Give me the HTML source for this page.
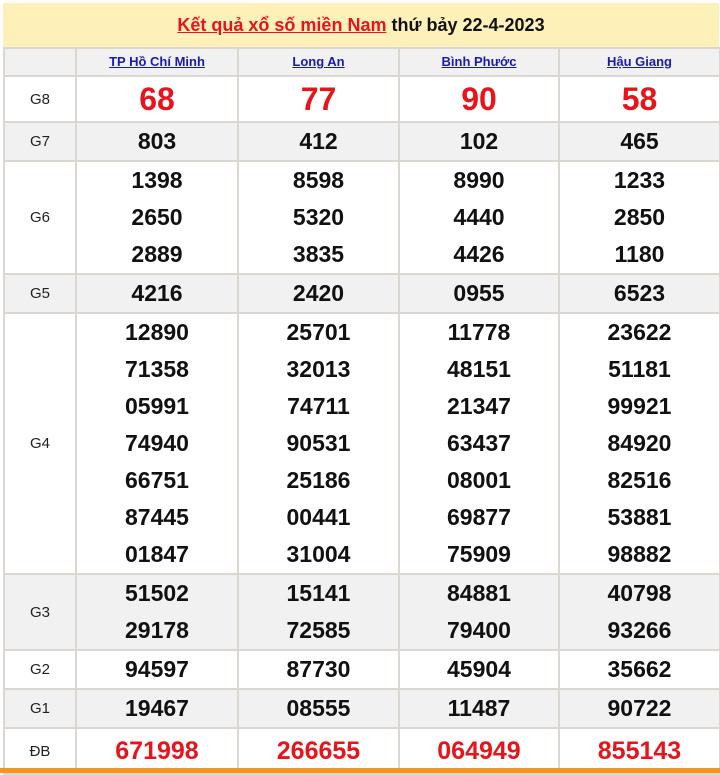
<!DOCTYPE html>
<html><head><meta charset="utf-8"><style>
*{margin:0;padding:0;box-sizing:border-box}
body{width:720px;height:773px;background:#fff;font-family:"Liberation Sans",Arial,sans-serif;position:relative;overflow:hidden}
.hdr{position:absolute;left:3px;top:3px;width:716px;height:45px;background:#fdf0b9;text-align:center;font-weight:bold;font-size:18px;line-height:45px;color:#111}
.hdr a{color:#e8141c;text-decoration:underline}
table{position:absolute;left:3px;top:47px;border-collapse:collapse;width:716px;table-layout:fixed}
td{border:2px solid #dcd6d0;text-align:center;vertical-align:middle;padding:0}
.lb{font-size:15px;color:#222}
.th td{background:#f1f1f1;height:28px}
.th a{color:#1a1ab0;font-weight:bold;font-size:13px;text-decoration:underline}
.g{background:#f1f1f1}
.n{font-weight:bold;font-size:23px;color:#111;line-height:37px}
.r8{font-weight:bold;font-size:32px;color:#e8141c}
.db{font-size:25px;color:#e8141c;font-weight:bold;letter-spacing:0}
.bar{position:absolute;left:0;top:768px;width:720px;height:5px;background:#f7941d}
</style></head><body>
<div class="hdr"><a>Kết quả xổ số miền Nam</a> thứ bảy 22-4-2023</div>
<table>
<colgroup><col style="width:72px"><col style="width:162px"><col style="width:161px"><col style="width:160px"><col style="width:161px"></colgroup>
<tr class="th"><td></td><td><a>TP Hồ Chí Minh</a></td><td><a>Long An</a></td><td><a>Bình Phước</a></td><td><a>Hậu Giang</a></td></tr>
<tr style="height:46px"><td class="lb">G8</td><td class="r8">68</td><td class="r8">77</td><td class="r8">90</td><td class="r8">58</td></tr>
<tr class="g" style="height:38px"><td class="lb">G7</td><td class="n">803</td><td class="n">412</td><td class="n">102</td><td class="n">465</td></tr>
<tr style="height:112px"><td class="lb">G6</td><td class="n">1398<br>2650<br>2889</td><td class="n">8598<br>5320<br>3835</td><td class="n">8990<br>4440<br>4426</td><td class="n">1233<br>2850<br>1180</td></tr>
<tr class="g" style="height:38px"><td class="lb">G5</td><td class="n">4216</td><td class="n">2420</td><td class="n">0955</td><td class="n">6523</td></tr>
<tr style="height:260px"><td class="lb">G4</td><td class="n">12890<br>71358<br>05991<br>74940<br>66751<br>87445<br>01847</td><td class="n">25701<br>32013<br>74711<br>90531<br>25186<br>00441<br>31004</td><td class="n">11778<br>48151<br>21347<br>63437<br>08001<br>69877<br>75909</td><td class="n">23622<br>51181<br>99921<br>84920<br>82516<br>53881<br>98882</td></tr>
<tr class="g" style="height:74px"><td class="lb">G3</td><td class="n">51502<br>29178</td><td class="n">15141<br>72585</td><td class="n">84881<br>79400</td><td class="n">40798<br>93266</td></tr>
<tr style="height:37px"><td class="lb">G2</td><td class="n">94597</td><td class="n">87730</td><td class="n">45904</td><td class="n">35662</td></tr>
<tr class="g" style="height:37px"><td class="lb">G1</td><td class="n">19467</td><td class="n">08555</td><td class="n">11487</td><td class="n">90722</td></tr>
<tr style="height:46px"><td class="lb">ĐB</td><td class="db">671998</td><td class="db">266655</td><td class="db">064949</td><td class="db">855143</td></tr>
</table>
<div class="bar"></div>
</body></html>
